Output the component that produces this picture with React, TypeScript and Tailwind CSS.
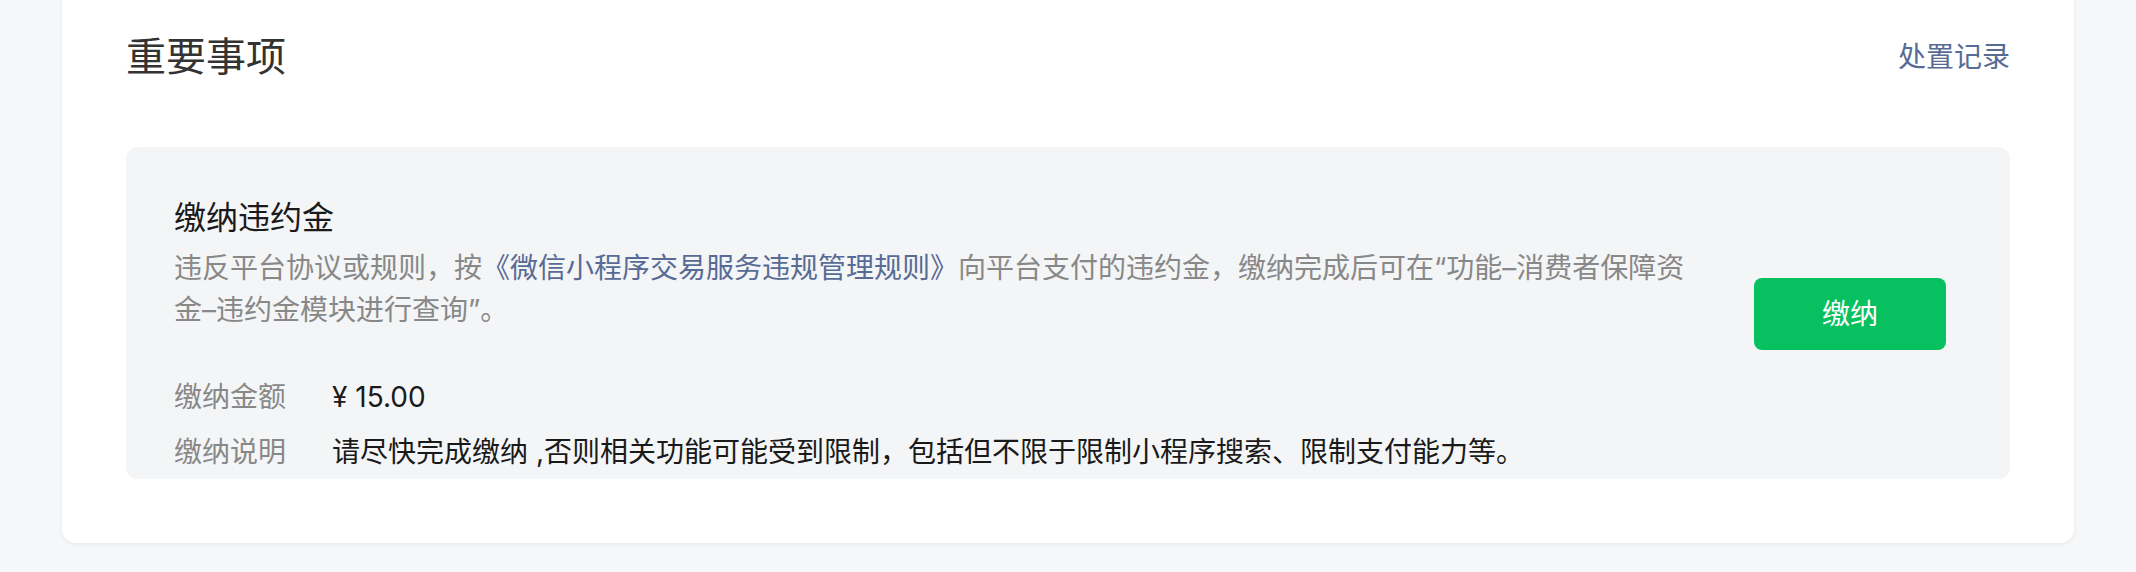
import React from "react";

const FONT = 'Inter, "Noto Sans CJK SC", "Noto Sans", sans-serif';

export default function App() {
  return (
    <div
      className="min-h-[572px] w-full bg-[#f6f7f9] px-[62px] pb-[29px] overflow-hidden"
      style={{ fontFamily: FONT }}
    >
      <div className="-mt-[16px] rounded-[14px] bg-white px-[64px] pt-[45px] pb-[64px] shadow-[0_1px_4px_rgba(0,0,0,0.07)]">
        <div className="flex items-center justify-between">
          <h2 className="text-[40px] leading-[56px] font-normal text-[#333333]">重要事项</h2>
          <a className="text-[28px] leading-[40px] text-[#576b95] cursor-pointer">处置记录</a>
        </div>

        <div className="mt-[62px] flex items-center rounded-[12px] bg-[#f4f5f6] pl-[48px] pr-[64px] pt-[47px]">
          <div className="min-w-0 flex-1">
            <div className="text-[32px] leading-[48px] text-[#1a1a1a]">缴纳违约金</div>
            <p className="mt-[5px] text-[28px] leading-[42px] text-[#888888]">
              违反平台协议或规则，按
              <span className="text-[#576b95]">《微信小程序交易服务违规管理规则》</span>
              向平台支付的违约金，缴纳完成后可在“功能–消费者保障资金–违约金模块进行查询”。
            </p>
            <div className="mt-[38px] text-[28px]">
              <div className="flex h-[55px] items-center">
                <span className="w-[158px] shrink-0 text-[#888888]">缴纳金额</span>
                <span className="text-[#1a1a1a]">¥ 15.00</span>
              </div>
              <div className="flex h-[55px] items-center">
                <span className="w-[158px] shrink-0 text-[#888888]">缴纳说明</span>
                <span className="text-[#1a1a1a]">
                  请尽快完成缴纳 ,否则相关功能可能受到限制，包括但不限于限制小程序搜索、限制支付能力等。
                </span>
              </div>
            </div>
          </div>
          <button className="ml-[48px] h-[72px] w-[192px] shrink-0 self-center -mt-[45px] rounded-[8px] bg-[#07c160] text-[28px] text-white">
            缴纳
          </button>
        </div>
      </div>
    </div>
  );
}
